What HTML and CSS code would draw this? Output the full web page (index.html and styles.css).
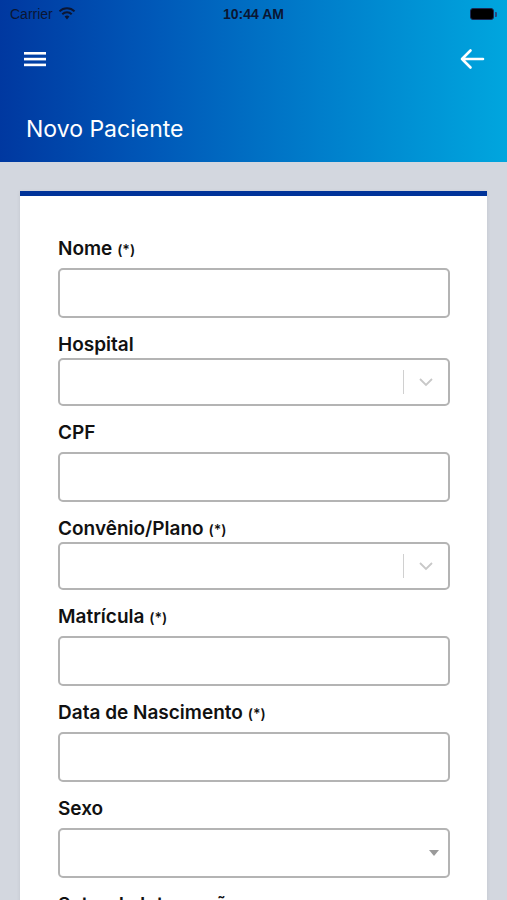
FILE: index.html
```html
<!DOCTYPE html>
<html lang="pt">
<head>
<meta charset="utf-8">
<link rel="stylesheet" href="styles.css">
</head>
<body>
<div class="top">
  <div class="status">
    <div class="carrier">Carrier
      <svg class="wifi" width="18" height="13" viewBox="0 0 18 13"><path d="M9 12.5 L6.6 9.6 A3.6 3.6 0 0 1 11.4 9.6 Z" fill="#0b1633"/><path d="M4.3 7.2 A6.8 6.8 0 0 1 13.7 7.2" stroke="#0b1633" stroke-width="2" fill="none"/><path d="M1.5 4.4 A10.6 10.6 0 0 1 16.5 4.4" stroke="#0b1633" stroke-width="2" fill="none"/></svg>
    </div>
    <div class="time">10:44 AM</div>
    <div class="battery"><span class="batt-body"></span><span class="batt-tip"></span></div>
  </div>
  <div class="toolbar">
    <svg width="24" height="18" viewBox="0 0 24 18"><rect x="1" y="2" width="22" height="2.6" fill="#fff"/><rect x="1" y="7.8" width="22" height="2.6" fill="#fff"/><rect x="1" y="13.6" width="22" height="2.6" fill="#fff"/></svg>
    <svg width="26" height="22" viewBox="0 0 26 22"><path d="M24 11 H3 M11.5 2.5 L3 11 L11.5 19.5" stroke="#fff" stroke-width="2.6" fill="none" stroke-linecap="round" stroke-linejoin="round"/></svg>
  </div>
  <h1 class="title">Novo Paciente</h1>
</div>
<main class="page">
  <form class="card">
    <div class="field">
      <label class="lbl">Nome <small>(*)</small></label>
      <div class="input"></div>
    </div>
    <div class="field">
      <label class="lbl">Hospital</label>
      <div class="rselect">
        <span class="sep"></span>
        <svg class="chev" width="16" height="10" viewBox="0 0 16 10"><path d="M2 2 L8 8 L14 2" stroke="#c8c8c8" stroke-width="1.8" fill="none"/></svg>
      </div>
    </div>
    <div class="field">
      <label class="lbl">CPF</label>
      <div class="input"></div>
    </div>
    <div class="field">
      <label class="lbl">Convênio/Plano <small>(*)</small></label>
      <div class="rselect">
        <span class="sep"></span>
        <svg class="chev" width="16" height="10" viewBox="0 0 16 10"><path d="M2 2 L8 8 L14 2" stroke="#c8c8c8" stroke-width="1.8" fill="none"/></svg>
      </div>
    </div>
    <div class="field">
      <label class="lbl">Matrícula <small>(*)</small></label>
      <div class="input"></div>
    </div>
    <div class="field">
      <label class="lbl">Data de Nascimento <small>(*)</small></label>
      <div class="input"></div>
    </div>
    <div class="field">
      <label class="lbl">Sexo</label>
      <div class="input native">
        <svg class="caret" width="10" height="6" viewBox="0 0 10 6"><path d="M0 0 H10 L5 6 Z" fill="#9a9a9a"/></svg>
      </div>
    </div>
    <div class="field last">
      <label class="lbl">Setor de Internação</label>
    </div>
  </form>
</main>
</body>
</html>
```
FILE: styles.css
```css
* { box-sizing: border-box; }
html, body { margin: 0; padding: 0; }
body {
  font-family: Inter, "Liberation Sans", Arial, sans-serif;
  background: #d3d7df;
  width: 507px;
  height: 900px;
  overflow: hidden;
}
.top {
  height: 162px;
  background: linear-gradient(90deg, #0038a0 0%, #0058b8 30%, #0080cc 65%, #00a6de 100%);
  color: #fff;
}
.status {
  height: 28px;
  display: flex;
  align-items: center;
  justify-content: space-between;
  padding: 0 10px 0 10px;
  color: #0b1633;
  font-size: 14px;
}
.carrier { display: flex; align-items: center; gap: 5px; width: 120px; font-family: "Liberation Sans", Arial, sans-serif; }
.wifi { margin-top: -1px; }
.time { font-weight: bold; font-size: 14px; font-family: "Liberation Sans", Arial, sans-serif; }
.battery { width: 120px; display: flex; justify-content: flex-end; align-items: center; padding-right: 0; }
.batt-body {
  width: 24px; height: 12px; border-radius: 3px; background: #000;
  border: 1px solid #1a2a55;
}
.batt-tip { width: 2px; height: 5px; background: #2a4b80; border-radius: 0 1px 1px 0; margin-left: 1px; }
.toolbar {
  height: 62px;
  display: flex;
  align-items: center;
  justify-content: space-between;
  padding: 0 22px 0 23px;
}
.title {
  margin: 0;
  padding: 26px 0 0 26px;
  font-size: 23px;
  font-weight: normal;
  line-height: 26px;
}
.page { padding: 29px 20px 0 20px; }
.card {
  background: #fff;
  border-top: 5px solid #003399;
  box-shadow: 0 1px 4px rgba(0,0,0,0.08);
  padding: 42px 37px 20px 38px;
  display: flex;
  flex-direction: column;
  gap: 16px;
}
.field { display: flex; flex-direction: column; }
.lbl {
  font-size: 19px;
  font-weight: 600;
  color: #111;
  line-height: 22px;
  height: 22px;
}
.lbl small { font-size: 14px; font-weight: 600; line-height: 1; }
.input {
  margin-top: 8px;
  height: 50px;
  border: 2px solid #b4b4b4;
  border-radius: 5px;
  background: #fff;
}
.native { display: flex; align-items: center; justify-content: flex-end; padding-right: 9px; }
.rselect {
  margin-top: 2px;
  height: 48px;
  border: 2px solid #b4b4b4;
  border-radius: 5px;
  display: flex;
  align-items: center;
  justify-content: flex-end;
  padding-right: 14px;
}
.sep { width: 1px; height: 24px; background: #d0d0d0; margin-right: 14px; }
.chev { display: block; }
.last { height: 40px; }
```
